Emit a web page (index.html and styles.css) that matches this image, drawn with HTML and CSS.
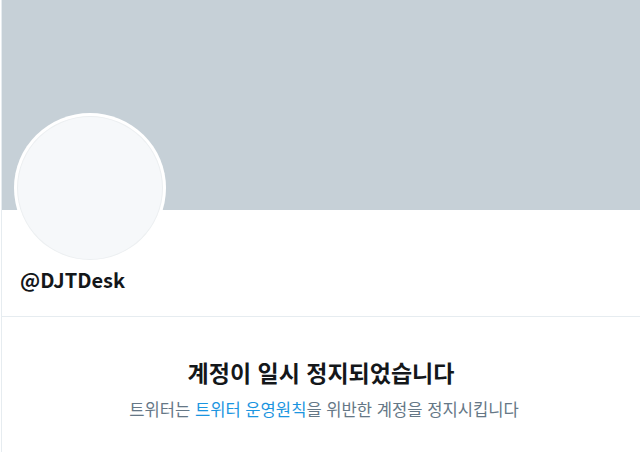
FILE: index.html
```html
<!DOCTYPE html>
<html lang="ko">
<head>
	<meta charset="UTF-8">
	<title>@DJTDesk</title>
	<link rel="stylesheet" href="styles.css">
</head>
<body>
	<div class="page">
		<div class="banner"></div>
		<div class="profile">
			<div class="avatar"><div class="avatar-in"></div></div>
			<div class="handle">@DJTDesk</div>
		</div>
		<div class="notice">
			<div class="notice-title">계정이 일시 정지되었습니다</div>
			<div class="notice-text">트위터는 <a href="#">트위터 운영원칙</a>을 위반한 계정을 정지시킵니다</div>
		</div>
	</div>
</body>
</html>
```

FILE: styles.css
```css
body{
	margin: 0;
	padding: 0;
	background: #fff;
	font-family: "Noto Sans CJK KR", "Noto Sans", sans-serif;
}
.page{
	margin-left: 1px;
	border-left: 1px solid #e6ecf0;
	height: 452px;
	overflow: hidden;
}
.banner{
	height: 210px;
	background: #c6d0d7;
}
.profile{
	display: flow-root;
	padding: 0 18px;
	border-bottom: 1px solid #e6ecf0;
	height: 106px;
}
.avatar{
	width: 152px;
	height: 150px;
	margin-top: -97px;
	margin-left: -6px;
	border-radius: 50%;
	background: #fff;
	padding: 3px;
	box-sizing: border-box;
}
.avatar-in{
	width: 100%;
	height: 100%;
	border-radius: 50%;
	border: 1px solid #eceff1;
	box-sizing: border-box;
	background: #f6f8fa;
}
.handle{
	margin-top: 2px;
	font-size: 20px;
	font-weight: bold;
	color: #14171a;
	line-height: 30px;
}
.notice{
	text-align: center;
	padding-top: 39px;
}
.notice-title{
	font-size: 23px;
	font-weight: bold;
	color: #14171a;
	line-height: 32px;
}
.notice-text{
	margin-top: 10px;
	padding-left: 6px;
	font-size: 16.6px;
	color: #657786;
	line-height: 22px;
}
.notice-text a{
	color: #1b95e0;
	text-decoration: none;
}
```
